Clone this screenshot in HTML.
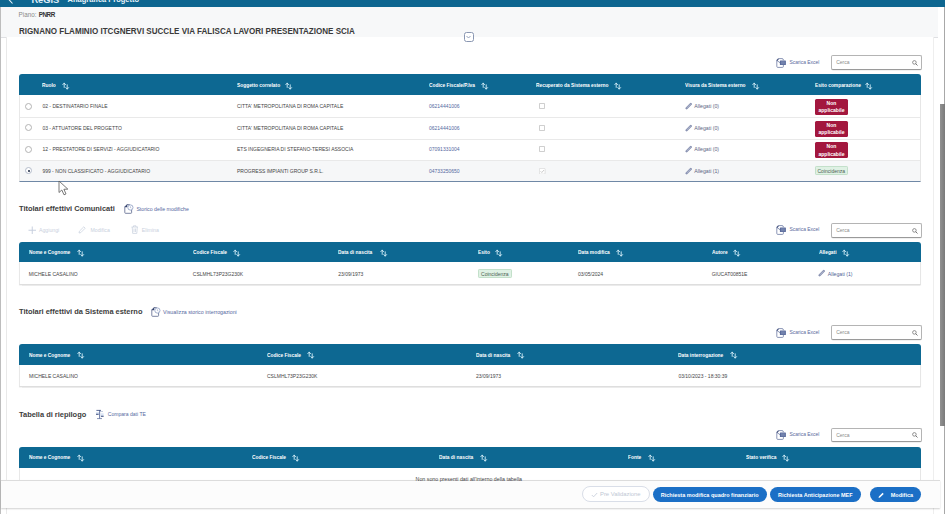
<!DOCTYPE html>
<html><head><meta charset="utf-8">
<style>
*{box-sizing:border-box}
html,body{margin:0;padding:0}
body{width:945px;height:514px;overflow:hidden;position:relative;background:#fff;font-family:"Liberation Sans",sans-serif;color:#3a3a3a}
.a{position:absolute;white-space:nowrap}
.topbar{position:absolute;left:0;top:0;width:945px;height:7px;background:#0d6690;overflow:hidden}
.band{position:absolute;left:1px;top:7px;width:937px;height:30.6px;background:#f7f8f9;border-bottom:1.2px solid #dfe0e3}
.lline{position:absolute;left:0;top:7px;width:1.1px;height:507px;background:#bdbdbd}
.card{position:absolute;left:6px;top:37px;width:928px;height:480px;border-left:1px solid #e9e9e9;border-right:1px solid #eeeeee;background:#fff}
.sb{position:absolute;left:944px;top:7px;width:1px;height:507px;background:#a8a8a8}
.thumb{position:absolute;left:940px;top:104px;width:5px;height:322px;background:linear-gradient(90deg,#929292,#7a7a7a)}
.th{position:absolute;left:19px;width:902px;height:21px;background:#0d6892;border-radius:3px 3px 0 0}
.tb{position:absolute;left:19px;width:902px;border-left:1px solid #e8e8e8;border-right:1px solid #e6e6e6;background:#fff}
.hl{position:absolute;font-weight:bold;font-size:5.25px;transform:scaleX(0.924);transform-origin:0 0;color:#fff;white-space:nowrap;line-height:6px}
.cell{position:absolute;font-size:5px;color:#444;white-space:nowrap;line-height:6px}
.link{color:#5468a0}
.sec{position:absolute;left:19px;font-weight:bold;font-size:7.45px;color:#3d3d3d;white-space:nowrap;line-height:9px}
.xl{position:absolute;left:776px;width:44px;height:10px}
.xlt{position:absolute;left:789.4px;font-size:4.97px;color:#5a6a9c;white-space:nowrap;line-height:6px}
.search{position:absolute;left:831px;width:90.5px;height:14.5px;border:1px solid #b4b4b4;border-bottom-color:#9a9a9a;border-radius:2px;background:#fff;box-shadow:0 0.5px 0.6px rgba(0,0,0,.12)}
.search span{position:absolute;left:4.2px;top:3.1px;font-size:5px;color:#8a8a8a;line-height:6px}
.search svg{position:absolute;right:3px;top:3.5px}
.sort{position:absolute}
.footer{position:absolute;left:1px;top:480px;width:939px;height:28px;background:#fcfcfc;border-top:1px solid #dcdcdc;box-shadow:0 1px 1.5px rgba(0,0,0,.18)}
.btn{position:absolute;top:487px;height:15px;border-radius:8px;background:#1b6fc6;color:#fff;font-weight:bold;font-size:5.5px;line-height:16px;white-space:nowrap}
.badge{position:absolute;left:815px;width:33px;height:16.3px;background:#a3173e;border-radius:1.5px;color:#fff;font-weight:bold;font-size:5.05px;line-height:7.6px;text-align:center;padding-top:1.1px}
.coinc{position:absolute;height:9.3px;background:#dff1e4;border-radius:1.2px;color:#4c5e52;font-size:5px;line-height:8.3px;text-align:center;border:0.6px solid #c3e0ca}
</style></head><body>

<div class="topbar">
  <svg class="a" style="left:7.5px;top:-4px" width="6" height="8" viewBox="0 0 6 8"><path d="M4.5 0.5 L1.3 4 L4.5 7.5" stroke="#e8f4fb" stroke-width="1.1" fill="none"/></svg>
  <div class="a" style="left:31.4px;top:-4.3px;font-size:9.3px;font-weight:bold;color:#e0f0fa;line-height:9.5px">ReGiS</div>
  <div class="a" style="left:67.6px;top:-3.6px;font-size:7.47px;font-weight:bold;color:#e8f4fb;line-height:7.47px">Anagrafica Progetto</div>
</div>
</div>
<div class="band"></div>
<div class="lline"></div>
<div class="card"></div>
<div class="sb"></div><div class="thumb"></div>

<div class="a" style="left:18.6px;top:11px;font-size:6.3px;color:#8a8a8a;line-height:8px">Piano: <b style="color:#333;font-size:6.3px;margin-left:0.5px;letter-spacing:-0.45px">PNRR</b></div>
<div class="a" style="left:19px;top:25.85px;font-size:8.8px;transform:scaleX(0.9155);transform-origin:0 0;font-weight:bold;color:#3a3a3a;line-height:10px">RIGNANO FLAMINIO ITCGNERVI SUCCLE VIA FALISCA LAVORI PRESENTAZIONE SCIA</div>
<div class="a" style="left:464px;top:32px;width:9.5px;height:10px;border:1.4px solid #8a97b2;border-radius:2.5px;background:#fff">
  <svg style="position:absolute;left:1.2px;top:1.8px" width="5" height="4" viewBox="0 0 5 4"><path d="M0.5 1 L2.5 3 L4.5 1" stroke="#8a97b2" stroke-width="0.9" fill="none"/></svg>
</div>

<svg class="a" style="left:776px;top:57.6px" width="11" height="10" viewBox="0 0 11 10"><path d="M2.6 0.6 H6 Q7.4 0.6 7.4 2 V2.2 M7.4 7.2 V8.4 Q7.4 9.4 6.4 9.4 H1.8 Q0.8 9.4 0.8 8.4 V2.4 Z" stroke="#6d7ba3" stroke-width="0.8" fill="#fff"/><path d="M0.8 2.6 L2.6 0.6" stroke="#3f4d7a" stroke-width="1.1"/><rect x="3.9" y="2.6" width="6" height="4.4" rx="0.5" fill="#5b6b9c"/><path d="M5 3.8 H8.8 M5 4.8 H8.8 M5 5.8 H8.8" stroke="#a9b6d4" stroke-width="0.35"/></svg>
<div class="xlt" style="top:59.5px">Scarica Excel</div>
<div class="search" style="top:55.3px"><span>Cerca</span><svg width="6" height="6" viewBox="0 0 6 6"><circle cx="2.4" cy="2.4" r="1.8" stroke="#666" stroke-width="0.7" fill="none"/><path d="M3.7 3.7 L5.5 5.5" stroke="#666" stroke-width="0.9"/></svg></div>
<div class="th" style="top:74.3px;height:21px"></div>
<div class="hl" style="left:42px;top:81.7px">Ruolo</div>
<svg class="sort" style="left:62px;top:81.5px" width="8" height="8" viewBox="0 0 8 8"><path d="M2.2 5.4 V1.2 M0.8 2.6 L2.2 1.1 L3.6 2.6" stroke="#d8f0fb" stroke-width="0.9" fill="none" stroke-linecap="round" stroke-linejoin="round"/><path d="M5.2 2.8 V7 M3.8 5.6 L5.2 7.1 L6.6 5.6" stroke="#d8f0fb" stroke-width="0.9" fill="none" stroke-linecap="round" stroke-linejoin="round"/></svg>
<div class="hl" style="left:237px;top:81.7px">Soggetto correlato</div>
<svg class="sort" style="left:285.4px;top:81.5px" width="8" height="8" viewBox="0 0 8 8"><path d="M2.2 5.4 V1.2 M0.8 2.6 L2.2 1.1 L3.6 2.6" stroke="#d8f0fb" stroke-width="0.9" fill="none" stroke-linecap="round" stroke-linejoin="round"/><path d="M5.2 2.8 V7 M3.8 5.6 L5.2 7.1 L6.6 5.6" stroke="#d8f0fb" stroke-width="0.9" fill="none" stroke-linecap="round" stroke-linejoin="round"/></svg>
<div class="hl" style="left:429px;top:81.7px">Codice Fiscale/P.Iva</div>
<svg class="sort" style="left:481.4px;top:81.5px" width="8" height="8" viewBox="0 0 8 8"><path d="M2.2 5.4 V1.2 M0.8 2.6 L2.2 1.1 L3.6 2.6" stroke="#d8f0fb" stroke-width="0.9" fill="none" stroke-linecap="round" stroke-linejoin="round"/><path d="M5.2 2.8 V7 M3.8 5.6 L5.2 7.1 L6.6 5.6" stroke="#d8f0fb" stroke-width="0.9" fill="none" stroke-linecap="round" stroke-linejoin="round"/></svg>
<div class="hl" style="left:536px;top:81.7px">Recuperato da Sistema esterno</div>
<svg class="sort" style="left:614px;top:81.5px" width="8" height="8" viewBox="0 0 8 8"><path d="M2.2 5.4 V1.2 M0.8 2.6 L2.2 1.1 L3.6 2.6" stroke="#d8f0fb" stroke-width="0.9" fill="none" stroke-linecap="round" stroke-linejoin="round"/><path d="M5.2 2.8 V7 M3.8 5.6 L5.2 7.1 L6.6 5.6" stroke="#d8f0fb" stroke-width="0.9" fill="none" stroke-linecap="round" stroke-linejoin="round"/></svg>
<div class="hl" style="left:685px;top:81.7px">Visura da Sistema esterno</div>
<svg class="sort" style="left:751.5px;top:81.5px" width="8" height="8" viewBox="0 0 8 8"><path d="M2.2 5.4 V1.2 M0.8 2.6 L2.2 1.1 L3.6 2.6" stroke="#d8f0fb" stroke-width="0.9" fill="none" stroke-linecap="round" stroke-linejoin="round"/><path d="M5.2 2.8 V7 M3.8 5.6 L5.2 7.1 L6.6 5.6" stroke="#d8f0fb" stroke-width="0.9" fill="none" stroke-linecap="round" stroke-linejoin="round"/></svg>
<div class="hl" style="left:814.5px;top:81.7px">Esito comparazione</div>
<svg class="sort" style="left:865px;top:81.5px" width="8" height="8" viewBox="0 0 8 8"><path d="M2.2 5.4 V1.2 M0.8 2.6 L2.2 1.1 L3.6 2.6" stroke="#d8f0fb" stroke-width="0.9" fill="none" stroke-linecap="round" stroke-linejoin="round"/><path d="M5.2 2.8 V7 M3.8 5.6 L5.2 7.1 L6.6 5.6" stroke="#d8f0fb" stroke-width="0.9" fill="none" stroke-linecap="round" stroke-linejoin="round"/></svg>
<div class="tb" style="top:95.3px;height:86.9px;border-bottom:1.5px solid #6f88a6"></div>
<div class="a" style="left:20px;top:160.1px;width:900px;height:20.7px;background:#f6f7f8"></div>
<div class="a" style="left:20px;top:117.1px;width:900px;height:1px;background:#e9e9e9"></div>
<div class="a" style="left:20px;top:138.6px;width:900px;height:1px;background:#e9e9e9"></div>
<div class="a" style="left:20px;top:160.1px;width:900px;height:1px;background:#e9e9e9"></div>
<div class="a" style="left:25.2px;top:102.7px;width:7px;height:7px;border:0.7px solid #b3b3b3;border-radius:50%;background:#fff"></div>
<div class="cell" style="left:42.4px;top:103.2px">02 - DESTINATARIO FINALE</div>
<div class="cell" style="left:237px;top:103.2px">CITTA' METROPOLITANA DI ROMA CAPITALE</div>
<div class="cell link" style="left:429px;top:103.2px">06214441006</div>
<div class="a" style="left:539px;top:103.0px;width:6.3px;height:6.3px;border:0.6px solid #cfcfcf;border-radius:0.8px;background:#fff"></div>
<svg class="a" style="left:684.5px;top:102.0px" width="8" height="8" viewBox="0 0 8 8"><path d="M1.6 6.2 L5.8 2" stroke="#8a93b2" stroke-width="2.3" stroke-linecap="round"/><path d="M2.2 5.6 L5.3 2.5" stroke="#c9d0e2" stroke-width="0.6" stroke-linecap="round"/></svg>
<div class="cell" style="left:694.3px;top:103.2px;color:#5d6582;font-size:5.2px">Allegati (0)</div>
<div class="badge" style="top:98.7px">Non<br>applicabile</div>
<div class="a" style="left:25.2px;top:124.3px;width:7px;height:7px;border:0.7px solid #b3b3b3;border-radius:50%;background:#fff"></div>
<div class="cell" style="left:42.4px;top:124.8px">03 - ATTUATORE DEL PROGETTO</div>
<div class="cell" style="left:237px;top:124.8px">CITTA' METROPOLITANA DI ROMA CAPITALE</div>
<div class="cell link" style="left:429px;top:124.8px">06214441006</div>
<div class="a" style="left:539px;top:124.6px;width:6.3px;height:6.3px;border:0.6px solid #cfcfcf;border-radius:0.8px;background:#fff"></div>
<svg class="a" style="left:684.5px;top:123.6px" width="8" height="8" viewBox="0 0 8 8"><path d="M1.6 6.2 L5.8 2" stroke="#8a93b2" stroke-width="2.3" stroke-linecap="round"/><path d="M2.2 5.6 L5.3 2.5" stroke="#c9d0e2" stroke-width="0.6" stroke-linecap="round"/></svg>
<div class="cell" style="left:694.3px;top:124.8px;color:#5d6582;font-size:5.2px">Allegati (0)</div>
<div class="badge" style="top:120.5px">Non<br>applicabile</div>
<div class="a" style="left:25.2px;top:145.8px;width:7px;height:7px;border:0.7px solid #b3b3b3;border-radius:50%;background:#fff"></div>
<div class="cell" style="left:42.4px;top:146.3px">12 - PRESTATORE DI SERVIZI - AGGIUDICATARIO</div>
<div class="cell" style="left:237px;top:146.3px">ETS INGEGNERIA DI STEFANO-TERESI ASSOCIA</div>
<div class="cell link" style="left:429px;top:146.3px">07091331004</div>
<div class="a" style="left:539px;top:146.2px;width:6.3px;height:6.3px;border:0.6px solid #cfcfcf;border-radius:0.8px;background:#fff"></div>
<svg class="a" style="left:684.5px;top:145.2px" width="8" height="8" viewBox="0 0 8 8"><path d="M1.6 6.2 L5.8 2" stroke="#8a93b2" stroke-width="2.3" stroke-linecap="round"/><path d="M2.2 5.6 L5.3 2.5" stroke="#c9d0e2" stroke-width="0.6" stroke-linecap="round"/></svg>
<div class="cell" style="left:694.3px;top:146.3px;color:#5d6582;font-size:5.2px">Allegati (0)</div>
<div class="badge" style="top:142.0px">Non<br>applicabile</div>
<div class="a" style="left:25.2px;top:167.3px;width:7px;height:7px;border:0.7px solid #b4bccb;border-radius:50%;background:#fff"></div><div class="a" style="left:27.5px;top:169.6px;width:2.4px;height:2.4px;border-radius:50%;background:#1d2a44"></div>
<div class="cell" style="left:42.4px;top:167.8px">999 - NON CLASSIFICATO - AGGIUDICATARIO</div>
<div class="cell" style="left:237px;top:167.8px">PROGRESS IMPIANTI GROUP S.R.L.</div>
<div class="cell link" style="left:429px;top:167.8px">04733250650</div>
<svg class="a" style="left:539px;top:167.6px" width="6.5" height="6.5" viewBox="0 0 6.5 6.5"><rect x="0.4" y="0.4" width="5.7" height="5.7" rx="0.8" stroke="#cfcfcf" stroke-width="0.6" fill="#fff"/><path d="M1.6 3.3 L2.8 4.5 L5 2" stroke="#a8a8a8" stroke-width="0.6" fill="none"/></svg>
<svg class="a" style="left:684.5px;top:166.6px" width="8" height="8" viewBox="0 0 8 8"><path d="M1.6 6.2 L5.8 2" stroke="#8a93b2" stroke-width="2.3" stroke-linecap="round"/><path d="M2.2 5.6 L5.3 2.5" stroke="#c9d0e2" stroke-width="0.6" stroke-linecap="round"/></svg>
<div class="cell" style="left:694.3px;top:167.8px;color:#5d6582;font-size:5.2px">Allegati (1)</div>
<div class="coinc" style="left:814.5px;top:166.2px;width:33.5px">Coincidenza</div>
<svg class="a" style="left:58px;top:180px" width="12" height="16" viewBox="0 0 12 16"><path d="M1 1 L1 12.5 L3.8 10 L6 14.8 L8 13.9 L5.9 9.3 L9.8 9.1 Z" fill="#fff" stroke="#555" stroke-width="0.8" stroke-linejoin="round"/></svg>
<div class="sec" style="top:204.2px">Titolari effettivi Comunicati</div>
<svg class="a" style="left:123.5px;top:204px" width="10" height="10" viewBox="0 0 10 10"><path d="M3 0.6 H5.8 M7.6 5.6 V8.6 Q7.6 9.3 6.9 9.3 H1.5 Q0.8 9.3 0.8 8.6 V2.8" stroke="#6c7699" stroke-width="0.9" fill="none"/><path d="M0.8 2.9 L3 0.6 V2.9 Z" fill="#34436e" stroke="#34436e" stroke-width="0.6"/><circle cx="6.4" cy="3.5" r="2.6" stroke="#8a9bc0" stroke-width="0.8" fill="#fff"/><path d="M6.4 2.3 V3.6 L7.4 4.1" stroke="#8a9bc0" stroke-width="0.6" fill="none"/></svg>
<div class="cell link" style="left:136.4px;top:205.8px;font-size:5.23px">Storico delle modifiche</div>
<svg class="a" style="left:27.5px;top:225.6px" width="8.5" height="8.5" viewBox="0 0 8.5 8.5"><path d="M4.25 0.5 V8 M0.5 4.25 H8" stroke="#c3cbdb" stroke-width="0.9"/></svg>
<div class="cell" style="left:39px;top:226.6px;color:#c9d0dd;font-size:5.2px">Aggiungi</div>
<svg class="a" style="left:78.4px;top:225.8px" width="8" height="8" viewBox="0 0 8 8"><path d="M1 7 L1.4 5.2 L5.8 0.8 L7.2 2.2 L2.8 6.6 Z" stroke="#c6cedd" stroke-width="0.7" fill="none"/></svg>
<div class="cell" style="left:90.5px;top:226.6px;color:#c9d0dd;font-size:5.2px">Modifica</div>
<svg class="a" style="left:130.7px;top:225.3px" width="7.5" height="9" viewBox="0 0 7.5 9"><path d="M0.5 2 H7 M2.5 2 V0.8 H5 V2 M1.2 2 L1.7 8.4 H5.8 L6.3 2 M3 3.5 V7 M4.5 3.5 V7" stroke="#c6cedd" stroke-width="0.7" fill="none"/></svg>
<div class="cell" style="left:141.8px;top:226.6px;color:#c9d0dd;font-size:5.2px">Elimina</div>
<svg class="a" style="left:776px;top:225.3px" width="11" height="10" viewBox="0 0 11 10"><path d="M2.6 0.6 H6 Q7.4 0.6 7.4 2 V2.2 M7.4 7.2 V8.4 Q7.4 9.4 6.4 9.4 H1.8 Q0.8 9.4 0.8 8.4 V2.4 Z" stroke="#6d7ba3" stroke-width="0.8" fill="#fff"/><path d="M0.8 2.6 L2.6 0.6" stroke="#3f4d7a" stroke-width="1.1"/><rect x="3.9" y="2.6" width="6" height="4.4" rx="0.5" fill="#5b6b9c"/><path d="M5 3.8 H8.8 M5 4.8 H8.8 M5 5.8 H8.8" stroke="#a9b6d4" stroke-width="0.35"/></svg>
<div class="xlt" style="top:227.2px">Scarica Excel</div>
<div class="search" style="top:223px"><span>Cerca</span><svg width="6" height="6" viewBox="0 0 6 6"><circle cx="2.4" cy="2.4" r="1.8" stroke="#666" stroke-width="0.7" fill="none"/><path d="M3.7 3.7 L5.5 5.5" stroke="#666" stroke-width="0.9"/></svg></div>
<div class="th" style="top:241.6px;height:20.6px"></div>
<div class="hl" style="left:28.8px;top:248.8px">Nome e Cognome</div>
<svg class="sort" style="left:77.4px;top:248.6px" width="8" height="8" viewBox="0 0 8 8"><path d="M2.2 5.4 V1.2 M0.8 2.6 L2.2 1.1 L3.6 2.6" stroke="#d8f0fb" stroke-width="0.9" fill="none" stroke-linecap="round" stroke-linejoin="round"/><path d="M5.2 2.8 V7 M3.8 5.6 L5.2 7.1 L6.6 5.6" stroke="#d8f0fb" stroke-width="0.9" fill="none" stroke-linecap="round" stroke-linejoin="round"/></svg>
<div class="hl" style="left:192.8px;top:248.8px">Codice Fiscale</div>
<svg class="sort" style="left:233px;top:248.6px" width="8" height="8" viewBox="0 0 8 8"><path d="M2.2 5.4 V1.2 M0.8 2.6 L2.2 1.1 L3.6 2.6" stroke="#d8f0fb" stroke-width="0.9" fill="none" stroke-linecap="round" stroke-linejoin="round"/><path d="M5.2 2.8 V7 M3.8 5.6 L5.2 7.1 L6.6 5.6" stroke="#d8f0fb" stroke-width="0.9" fill="none" stroke-linecap="round" stroke-linejoin="round"/></svg>
<div class="hl" style="left:338.3px;top:248.8px">Data di nascita</div>
<svg class="sort" style="left:380px;top:248.6px" width="8" height="8" viewBox="0 0 8 8"><path d="M2.2 5.4 V1.2 M0.8 2.6 L2.2 1.1 L3.6 2.6" stroke="#d8f0fb" stroke-width="0.9" fill="none" stroke-linecap="round" stroke-linejoin="round"/><path d="M5.2 2.8 V7 M3.8 5.6 L5.2 7.1 L6.6 5.6" stroke="#d8f0fb" stroke-width="0.9" fill="none" stroke-linecap="round" stroke-linejoin="round"/></svg>
<div class="hl" style="left:478.2px;top:248.8px">Esito</div>
<svg class="sort" style="left:495.4px;top:248.6px" width="8" height="8" viewBox="0 0 8 8"><path d="M2.2 5.4 V1.2 M0.8 2.6 L2.2 1.1 L3.6 2.6" stroke="#d8f0fb" stroke-width="0.9" fill="none" stroke-linecap="round" stroke-linejoin="round"/><path d="M5.2 2.8 V7 M3.8 5.6 L5.2 7.1 L6.6 5.6" stroke="#d8f0fb" stroke-width="0.9" fill="none" stroke-linecap="round" stroke-linejoin="round"/></svg>
<div class="hl" style="left:578px;top:248.8px">Data modifica</div>
<svg class="sort" style="left:616px;top:248.6px" width="8" height="8" viewBox="0 0 8 8"><path d="M2.2 5.4 V1.2 M0.8 2.6 L2.2 1.1 L3.6 2.6" stroke="#d8f0fb" stroke-width="0.9" fill="none" stroke-linecap="round" stroke-linejoin="round"/><path d="M5.2 2.8 V7 M3.8 5.6 L5.2 7.1 L6.6 5.6" stroke="#d8f0fb" stroke-width="0.9" fill="none" stroke-linecap="round" stroke-linejoin="round"/></svg>
<div class="hl" style="left:711.7px;top:248.8px">Autore</div>
<svg class="sort" style="left:733px;top:248.6px" width="8" height="8" viewBox="0 0 8 8"><path d="M2.2 5.4 V1.2 M0.8 2.6 L2.2 1.1 L3.6 2.6" stroke="#d8f0fb" stroke-width="0.9" fill="none" stroke-linecap="round" stroke-linejoin="round"/><path d="M5.2 2.8 V7 M3.8 5.6 L5.2 7.1 L6.6 5.6" stroke="#d8f0fb" stroke-width="0.9" fill="none" stroke-linecap="round" stroke-linejoin="round"/></svg>
<div class="hl" style="left:818.5px;top:248.8px">Allegati</div>
<svg class="sort" style="left:842.4px;top:248.6px" width="8" height="8" viewBox="0 0 8 8"><path d="M2.2 5.4 V1.2 M0.8 2.6 L2.2 1.1 L3.6 2.6" stroke="#d8f0fb" stroke-width="0.9" fill="none" stroke-linecap="round" stroke-linejoin="round"/><path d="M5.2 2.8 V7 M3.8 5.6 L5.2 7.1 L6.6 5.6" stroke="#d8f0fb" stroke-width="0.9" fill="none" stroke-linecap="round" stroke-linejoin="round"/></svg>
<div class="tb" style="top:262.2px;height:22.5px;border-bottom:1px solid #dedede;box-shadow:0 0.5px 1px rgba(0,0,0,.08)"></div>
<div class="cell" style="left:28.8px;top:270.6px">MICHELE CASALINO</div>
<div class="cell" style="left:192.8px;top:270.6px">CSLMHL73P23G230K</div>
<div class="cell" style="left:338.3px;top:270.6px">23/09/1973</div>
<div class="cell" style="left:578px;top:270.6px">03/05/2024</div>
<div class="cell" style="left:711.7px;top:270.6px">GIUCAT00851E</div>
<div class="coinc" style="left:478px;top:269.3px;width:33.6px;height:9px;line-height:8px">Coincidenza</div>
<svg class="a" style="left:818px;top:269.4px" width="8" height="8" viewBox="0 0 8 8"><path d="M1.6 6.2 L5.8 2" stroke="#8a93b2" stroke-width="2.3" stroke-linecap="round"/><path d="M2.2 5.6 L5.3 2.5" stroke="#c9d0e2" stroke-width="0.6" stroke-linecap="round"/></svg>
<div class="cell" style="left:827.8px;top:270.6px;color:#4f5f94;font-size:5.2px">Allegati (1)</div>
<div class="sec" style="top:307px">Titolari effettivi da Sistema esterno</div>
<svg class="a" style="left:151px;top:306.5px" width="10" height="10" viewBox="0 0 10 10"><path d="M3 0.6 H5.8 M7.6 5.6 V8.6 Q7.6 9.3 6.9 9.3 H1.5 Q0.8 9.3 0.8 8.6 V2.8" stroke="#6c7699" stroke-width="0.9" fill="none"/><path d="M0.8 2.9 L3 0.6 V2.9 Z" fill="#34436e" stroke="#34436e" stroke-width="0.6"/><circle cx="6.4" cy="3.5" r="2.6" stroke="#8a9bc0" stroke-width="0.8" fill="#fff"/><path d="M6.4 2.3 V3.6 L7.4 4.1" stroke="#8a9bc0" stroke-width="0.6" fill="none"/></svg>
<div class="cell link" style="left:163.1px;top:308.5px;font-size:5.27px">Visualizza storico interrogazioni</div>
<svg class="a" style="left:776px;top:327.6px" width="11" height="10" viewBox="0 0 11 10"><path d="M2.6 0.6 H6 Q7.4 0.6 7.4 2 V2.2 M7.4 7.2 V8.4 Q7.4 9.4 6.4 9.4 H1.8 Q0.8 9.4 0.8 8.4 V2.4 Z" stroke="#6d7ba3" stroke-width="0.8" fill="#fff"/><path d="M0.8 2.6 L2.6 0.6" stroke="#3f4d7a" stroke-width="1.1"/><rect x="3.9" y="2.6" width="6" height="4.4" rx="0.5" fill="#5b6b9c"/><path d="M5 3.8 H8.8 M5 4.8 H8.8 M5 5.8 H8.8" stroke="#a9b6d4" stroke-width="0.35"/></svg>
<div class="xlt" style="top:329.5px">Scarica Excel</div>
<div class="search" style="top:325.3px"><span>Cerca</span><svg width="6" height="6" viewBox="0 0 6 6"><circle cx="2.4" cy="2.4" r="1.8" stroke="#666" stroke-width="0.7" fill="none"/><path d="M3.7 3.7 L5.5 5.5" stroke="#666" stroke-width="0.9"/></svg></div>
<div class="th" style="top:344.3px;height:20.7px"></div>
<div class="hl" style="left:29px;top:351.6px">Nome e Cognome</div>
<svg class="sort" style="left:77.4px;top:351.4px" width="8" height="8" viewBox="0 0 8 8"><path d="M2.2 5.4 V1.2 M0.8 2.6 L2.2 1.1 L3.6 2.6" stroke="#d8f0fb" stroke-width="0.9" fill="none" stroke-linecap="round" stroke-linejoin="round"/><path d="M5.2 2.8 V7 M3.8 5.6 L5.2 7.1 L6.6 5.6" stroke="#d8f0fb" stroke-width="0.9" fill="none" stroke-linecap="round" stroke-linejoin="round"/></svg>
<div class="hl" style="left:267px;top:351.6px">Codice Fiscale</div>
<svg class="sort" style="left:307px;top:351.4px" width="8" height="8" viewBox="0 0 8 8"><path d="M2.2 5.4 V1.2 M0.8 2.6 L2.2 1.1 L3.6 2.6" stroke="#d8f0fb" stroke-width="0.9" fill="none" stroke-linecap="round" stroke-linejoin="round"/><path d="M5.2 2.8 V7 M3.8 5.6 L5.2 7.1 L6.6 5.6" stroke="#d8f0fb" stroke-width="0.9" fill="none" stroke-linecap="round" stroke-linejoin="round"/></svg>
<div class="hl" style="left:476px;top:351.6px">Data di nascita</div>
<svg class="sort" style="left:517px;top:351.4px" width="8" height="8" viewBox="0 0 8 8"><path d="M2.2 5.4 V1.2 M0.8 2.6 L2.2 1.1 L3.6 2.6" stroke="#d8f0fb" stroke-width="0.9" fill="none" stroke-linecap="round" stroke-linejoin="round"/><path d="M5.2 2.8 V7 M3.8 5.6 L5.2 7.1 L6.6 5.6" stroke="#d8f0fb" stroke-width="0.9" fill="none" stroke-linecap="round" stroke-linejoin="round"/></svg>
<div class="hl" style="left:678.4px;top:351.6px">Data interrogazione</div>
<svg class="sort" style="left:730px;top:351.4px" width="8" height="8" viewBox="0 0 8 8"><path d="M2.2 5.4 V1.2 M0.8 2.6 L2.2 1.1 L3.6 2.6" stroke="#d8f0fb" stroke-width="0.9" fill="none" stroke-linecap="round" stroke-linejoin="round"/><path d="M5.2 2.8 V7 M3.8 5.6 L5.2 7.1 L6.6 5.6" stroke="#d8f0fb" stroke-width="0.9" fill="none" stroke-linecap="round" stroke-linejoin="round"/></svg>
<div class="tb" style="top:365px;height:22px;border-bottom:1px solid #dedede;box-shadow:0 0.5px 1px rgba(0,0,0,.08)"></div>
<div class="cell" style="left:29px;top:373.3px">MICHELE CASALINO</div>
<div class="cell" style="left:267px;top:373.3px">CSLMHL73P23G230K</div>
<div class="cell" style="left:476px;top:373.3px">23/09/1973</div>
<div class="cell" style="left:678.4px;top:373.3px">03/10/2023 - 18:30:39</div>
<div class="sec" style="top:409.5px">Tabella di riepilogo</div>
<svg class="a" style="left:95px;top:409px" width="10" height="11" viewBox="0 0 10 11"><rect x="1" y="3" width="3" height="3" fill="#dde7f6"/><rect x="5.6" y="4.2" width="3" height="3.6" fill="#dde7f6"/><path d="M4.6 1 V9.8" stroke="#5a6b9c" stroke-width="0.9"/><path d="M1.4 1.4 H6" stroke="#4a5a8a" stroke-width="0.9"/><path d="M4.6 2.5 H8" stroke="#8a9abf" stroke-width="0.5"/><path d="M1 5.3 H3.6 M6 7.3 H8.6" stroke="#3d4c7c" stroke-width="1.1"/><path d="M2 9.6 H7" stroke="#6a7aa5" stroke-width="0.8"/></svg>
<div class="cell link" style="left:107.8px;top:411px;font-size:5.05px">Compara dati TE</div>
<svg class="a" style="left:776px;top:430.0px" width="11" height="10" viewBox="0 0 11 10"><path d="M2.6 0.6 H6 Q7.4 0.6 7.4 2 V2.2 M7.4 7.2 V8.4 Q7.4 9.4 6.4 9.4 H1.8 Q0.8 9.4 0.8 8.4 V2.4 Z" stroke="#6d7ba3" stroke-width="0.8" fill="#fff"/><path d="M0.8 2.6 L2.6 0.6" stroke="#3f4d7a" stroke-width="1.1"/><rect x="3.9" y="2.6" width="6" height="4.4" rx="0.5" fill="#5b6b9c"/><path d="M5 3.8 H8.8 M5 4.8 H8.8 M5 5.8 H8.8" stroke="#a9b6d4" stroke-width="0.35"/></svg>
<div class="xlt" style="top:431.9px">Scarica Excel</div>
<div class="search" style="top:427.7px"><span>Cerca</span><svg width="6" height="6" viewBox="0 0 6 6"><circle cx="2.4" cy="2.4" r="1.8" stroke="#666" stroke-width="0.7" fill="none"/><path d="M3.7 3.7 L5.5 5.5" stroke="#666" stroke-width="0.9"/></svg></div>
<div class="th" style="top:447px;height:20.5px"></div>
<div class="hl" style="left:29px;top:454.1px">Nome e Cognome</div>
<svg class="sort" style="left:77.4px;top:453.9px" width="8" height="8" viewBox="0 0 8 8"><path d="M2.2 5.4 V1.2 M0.8 2.6 L2.2 1.1 L3.6 2.6" stroke="#d8f0fb" stroke-width="0.9" fill="none" stroke-linecap="round" stroke-linejoin="round"/><path d="M5.2 2.8 V7 M3.8 5.6 L5.2 7.1 L6.6 5.6" stroke="#d8f0fb" stroke-width="0.9" fill="none" stroke-linecap="round" stroke-linejoin="round"/></svg>
<div class="hl" style="left:252px;top:454.1px">Codice Fiscale</div>
<svg class="sort" style="left:292.4px;top:453.9px" width="8" height="8" viewBox="0 0 8 8"><path d="M2.2 5.4 V1.2 M0.8 2.6 L2.2 1.1 L3.6 2.6" stroke="#d8f0fb" stroke-width="0.9" fill="none" stroke-linecap="round" stroke-linejoin="round"/><path d="M5.2 2.8 V7 M3.8 5.6 L5.2 7.1 L6.6 5.6" stroke="#d8f0fb" stroke-width="0.9" fill="none" stroke-linecap="round" stroke-linejoin="round"/></svg>
<div class="hl" style="left:439px;top:454.1px">Data di nascita</div>
<svg class="sort" style="left:479.7px;top:453.9px" width="8" height="8" viewBox="0 0 8 8"><path d="M2.2 5.4 V1.2 M0.8 2.6 L2.2 1.1 L3.6 2.6" stroke="#d8f0fb" stroke-width="0.9" fill="none" stroke-linecap="round" stroke-linejoin="round"/><path d="M5.2 2.8 V7 M3.8 5.6 L5.2 7.1 L6.6 5.6" stroke="#d8f0fb" stroke-width="0.9" fill="none" stroke-linecap="round" stroke-linejoin="round"/></svg>
<div class="hl" style="left:628px;top:454.1px">Fonte</div>
<svg class="sort" style="left:648px;top:453.9px" width="8" height="8" viewBox="0 0 8 8"><path d="M2.2 5.4 V1.2 M0.8 2.6 L2.2 1.1 L3.6 2.6" stroke="#d8f0fb" stroke-width="0.9" fill="none" stroke-linecap="round" stroke-linejoin="round"/><path d="M5.2 2.8 V7 M3.8 5.6 L5.2 7.1 L6.6 5.6" stroke="#d8f0fb" stroke-width="0.9" fill="none" stroke-linecap="round" stroke-linejoin="round"/></svg>
<div class="hl" style="left:745.6px;top:454.1px">Stato verifica</div>
<svg class="sort" style="left:782px;top:453.9px" width="8" height="8" viewBox="0 0 8 8"><path d="M2.2 5.4 V1.2 M0.8 2.6 L2.2 1.1 L3.6 2.6" stroke="#d8f0fb" stroke-width="0.9" fill="none" stroke-linecap="round" stroke-linejoin="round"/><path d="M5.2 2.8 V7 M3.8 5.6 L5.2 7.1 L6.6 5.6" stroke="#d8f0fb" stroke-width="0.9" fill="none" stroke-linecap="round" stroke-linejoin="round"/></svg>
<div class="tb" style="top:467.5px;height:20px"></div>
<div class="a" style="left:20px;top:479.6px;width:900px;height:0.8px;background:#e4e4e4"></div>
<div class="footer"></div>
<div class="cell" style="left:415.6px;top:476px;font-size:5.29px;color:#444">Non sono presenti dati all'interno della tabella</div>
<div class="a" style="left:582.2px;top:486.4px;width:67.4px;height:16px;border:1px solid #d9dee8;border-radius:8px;background:#fff"></div>
<svg class="a" style="left:590.5px;top:491.5px" width="7" height="6" viewBox="0 0 7 6"><path d="M0.8 3 L2.6 4.8 L6.2 1" stroke="#c3cad8" stroke-width="0.8" fill="none"/></svg>
<div class="cell" style="left:600px;top:491.4px;font-size:5.87px;color:#c0c7d4;line-height:6px">Pre Validazione</div>
<div class="btn" style="left:652.7px;width:114px;text-align:center">Richiesta modifica quadro finanziario</div>
<div class="btn" style="left:769.8px;width:91px;text-align:center">Richiesta Anticipazione MEF</div>
<div class="btn" style="left:870.2px;width:51.3px"><svg style="position:absolute;left:8px;top:4.6px" width="6.5" height="6.5" viewBox="0 0 6.5 6.5"><path d="M0.6 5.9 L0.9 4.5 L4.6 0.8 L5.7 1.9 L2 5.6 Z" fill="#fff"/></svg><span style="position:absolute;left:20.6px;top:0">Modifica</span></div>
</body></html>
